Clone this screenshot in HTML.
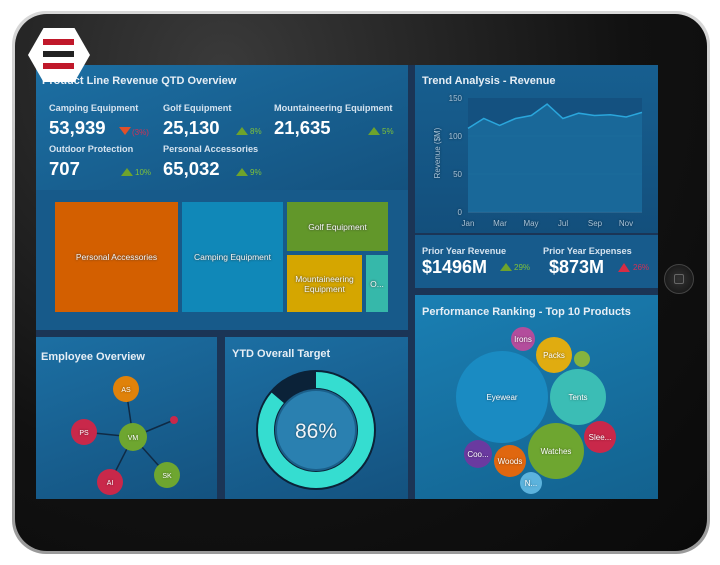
<!DOCTYPE html>
<html><head><style>
*{margin:0;padding:0;box-sizing:border-box}
body{width:720px;height:565px;background:#fff;position:relative;overflow:hidden;font-family:"Liberation Sans",sans-serif;color:#fff}
.a{position:absolute}
.p{position:absolute;background:linear-gradient(160deg,#1c6fa3,#14527f)}
.t{position:absolute;font-weight:bold;font-size:11px;color:#e6eef5}
.lbl{position:absolute;font-size:9.2px;font-weight:bold;color:#d5e3ef}
.big{position:absolute;font-size:18.5px;font-weight:bold}
.tm{position:absolute;display:flex;align-items:center;justify-content:center;text-align:center;font-size:8.5px;color:#f4f4f4;text-shadow:0 0 2px #333}
.up{color:#7ec23a;font-size:8px;position:absolute}
.up:before{content:"";display:inline-block;border-left:6px solid transparent;border-right:6px solid transparent;border-bottom:8px solid #6ea32c;margin-right:2px;vertical-align:-1px}
svg text{text-shadow:0 0 2px rgba(0,0,0,.5)}
</style></head><body>
<div class="a" style="left:12px;top:11px;width:698px;height:543px;border-radius:34px;background:linear-gradient(#d8d8d8,#9a9a9a);"></div>
<div class="a" style="left:15px;top:14px;width:692px;height:537px;border-radius:32px;background:radial-gradient(ellipse at 30% 10%,#3a3a3a,#111 60%,#0a0a0a);"></div>
<div class="a" style="left:664px;top:264px;width:30px;height:30px;border-radius:50%;background:radial-gradient(#333,#111);border:1px solid #444"></div>
<div class="a" style="left:674px;top:274px;width:10px;height:10px;border:1px solid #666;border-radius:2px"></div>
<div class="a" style="left:36px;top:65px;width:622px;height:434px;background:#1b3556"></div>

<div class="p" style="left:36px;top:65px;width:372px;height:125px"></div>
<div class="a" style="left:36px;top:190px;width:372px;height:140px;background:#175a8a"></div>
<div class="t" style="left:42px;top:75px">Product Line Revenue QTD Overview</div>
<div class="lbl" style="left:49px;top:103px">Camping Equipment</div>
<div class="big" style="left:49px;top:117px">53,939</div>
<div class="a" style="left:119px;top:127px;border-left:6px solid transparent;border-right:6px solid transparent;border-top:8px solid #e0502a"></div>
<div class="a" style="left:132px;top:128px;font-size:8px;color:#d33055">(3%)</div>
<div class="lbl" style="left:163px;top:103px">Golf Equipment</div>
<div class="big" style="left:163px;top:117px">25,130</div>
<div class="up" style="left:236px;top:127px">8%</div>
<div class="lbl" style="left:274px;top:103px">Mountaineering Equipment</div>
<div class="big" style="left:274px;top:117px">21,635</div>
<div class="up" style="left:368px;top:127px">5%</div>
<div class="lbl" style="left:49px;top:144px">Outdoor Protection</div>
<div class="big" style="left:49px;top:158px">707</div>
<div class="up" style="left:121px;top:168px">10%</div>
<div class="lbl" style="left:163px;top:144px">Personal Accessories</div>
<div class="big" style="left:163px;top:158px">65,032</div>
<div class="up" style="left:236px;top:168px">9%</div>

<div class="tm" style="left:55px;top:202px;width:123px;height:110px;background:#d35f00">Personal Accessories</div>
<div class="tm" style="left:182px;top:202px;width:101px;height:110px;background:#1088b8">Camping Equipment</div>
<div class="tm" style="left:287px;top:202px;width:101px;height:49px;background:#62972a">Golf Equipment</div>
<div class="tm" style="left:287px;top:255px;width:75px;height:57px;background:#d5a600">Mountaineering<br>Equipment</div>
<div class="tm" style="left:366px;top:255px;width:22px;height:57px;background:#36b8aa">O...</div>

<div class="a" style="left:28px;top:28px;width:62px;height:54px;background:#fff;clip-path:polygon(25% 0,75% 0,100% 50%,75% 100%,25% 100%,0 50%)"></div>
<div class="a" style="left:43px;top:39px;width:31px;height:6px;background:#c0182a"></div>
<div class="a" style="left:43px;top:51px;width:31px;height:6px;background:#222"></div>
<div class="a" style="left:43px;top:63px;width:31px;height:6px;background:#c0182a"></div>

<div class="p" style="left:415px;top:65px;width:243px;height:168px;background:linear-gradient(#175f90,#134f7c)"></div>
<div class="t" style="left:422px;top:75px">Trend Analysis - Revenue</div>
<svg class="a" style="left:415px;top:90px" width="243" height="140">
<rect x="53" y="8" width="174" height="114" fill="#145180"/>
<g stroke="#2a6d9a" stroke-width="0.7"><line x1="53" x2="227" y1="46" y2="46"/><line x1="53" x2="227" y1="84" y2="84"/></g>
<line x1="53" x2="227" y1="122" y2="122" stroke="#3d78a0"/>
<path d="M53,38.4 L68.8,28.5 L84.6,35.4 L100.5,28.5 L116.3,25.5 L132.1,14.1 L147.9,28.5 L163.7,23.2 L179.5,25.5 L195.4,24.7 L211.2,27 L227,22.4 L227,122 L53,122Z" fill="#1a6c9e" opacity="0.85"/>
<path d="M53,38.4 L68.8,28.5 L84.6,35.4 L100.5,28.5 L116.3,25.5 L132.1,14.1 L147.9,28.5 L163.7,23.2 L179.5,25.5 L195.4,24.7 L211.2,27 L227,22.4" fill="none" stroke="#2aa6dc" stroke-width="1.5"/>
<g font-size="8" fill="#a9c3d8" text-anchor="end"><text x="47" y="11">150</text><text x="47" y="49">100</text><text x="47" y="87">50</text><text x="47" y="125">0</text></g>
<g font-size="8" fill="#a9c3d8" text-anchor="middle"><text x="53" y="136">Jan</text><text x="85" y="136">Mar</text><text x="116" y="136">May</text><text x="148" y="136">Jul</text><text x="180" y="136">Sep</text><text x="211" y="136">Nov</text></g>
<text transform="translate(25,63) rotate(-90)" font-size="8" fill="#a9c3d8" text-anchor="middle">Revenue ($M)</text>
</svg>
<div class="a" style="left:415px;top:235px;width:243px;height:53px;background:#175b8c"></div>
<div class="lbl" style="left:422px;top:246px">Prior Year Revenue</div>
<div class="big" style="left:422px;top:257px;font-size:18px">$1496M</div>
<div class="up" style="left:500px;top:263px">29%</div>
<div class="lbl" style="left:543px;top:246px">Prior Year Expenses</div>
<div class="big" style="left:549px;top:257px;font-size:18px">$873M</div>
<div class="a" style="left:618px;top:263px;border-left:6px solid transparent;border-right:6px solid transparent;border-bottom:9px solid #d62c44"></div>
<div class="a" style="left:633px;top:263px;font-size:8px;color:#d33055">26%</div>

<div class="p" style="left:415px;top:295px;width:243px;height:204px;background:linear-gradient(160deg,#1a7fb3,#13628f)"></div>
<div class="t" style="left:422px;top:306px">Performance Ranking - Top 10 Products</div>
<svg class="a" style="left:0;top:0" width="720" height="565" font-family="Liberation Sans" font-size="8" fill="#fff" text-anchor="middle">
<circle cx="502" cy="397" r="46" fill="#1a8bc2"/><text x="502" y="400">Eyewear</text>
<circle cx="523" cy="339" r="12" fill="#b34d9c"/><text x="523" y="342">Irons</text>
<circle cx="554" cy="355" r="18" fill="#e0ac10"/><text x="554" y="358">Packs</text>
<circle cx="582" cy="359" r="8" fill="#86b33e"/>
<circle cx="578" cy="397" r="28" fill="#3bbdb5"/><text x="578" y="400">Tents</text>
<circle cx="600" cy="437" r="16" fill="#c9284a"/><text x="600" y="440">Slee...</text>
<circle cx="556" cy="451" r="28" fill="#6ea630"/><text x="556" y="454">Watches</text>
<circle cx="478" cy="454" r="14" fill="#6a3aa0"/><text x="478" y="457">Coo...</text>
<circle cx="510" cy="461" r="16" fill="#e0670f"/><text x="510" y="464">Woods</text>
<circle cx="531" cy="483" r="11" fill="#5cb3dd"/><text x="531" y="486">N...</text>
</svg>

<div class="p" style="left:36px;top:337px;width:181px;height:162px"></div>
<div class="t" style="left:41px;top:351px">Employee Overview</div>
<div class="p" style="left:225px;top:337px;width:183px;height:162px"></div>
<div class="t" style="left:232px;top:348px">YTD Overall Target</div>
<svg class="a" style="left:0;top:0" width="720" height="565" font-family="Liberation Sans" font-size="7" fill="#fff" text-anchor="middle">
<g stroke="#0f2a44" stroke-width="1.5"><line x1="133" y1="437" x2="126" y2="389"/><line x1="133" y1="437" x2="84" y2="432"/><line x1="133" y1="437" x2="110" y2="482"/><line x1="133" y1="437" x2="167" y2="475"/><line x1="133" y1="437" x2="174" y2="420"/></g>
<circle cx="126" cy="389" r="13" fill="#e0820a"/><text x="126" y="392">AS</text>
<circle cx="84" cy="432" r="13" fill="#c9284a"/><text x="84" y="435">PS</text>
<circle cx="110" cy="482" r="13" fill="#c9284a"/><text x="110" y="485">AI</text>
<circle cx="167" cy="475" r="13" fill="#6ea630"/><text x="167" y="478">SK</text>
<circle cx="133" cy="437" r="14" fill="#6ea630"/><text x="133" y="440">VM</text>
<circle cx="174" cy="420" r="4" fill="#c9284a"/>
<circle cx="316" cy="430" r="60" fill="#0b2238"/>
<circle cx="316" cy="430" r="50" fill="none" stroke="#35ddd0" stroke-width="16" stroke-dasharray="270.2 314.2" transform="rotate(-90 316 430)"/>
<circle cx="316" cy="430" r="41" fill="#1b5f8a"/>
<circle cx="316" cy="430" r="39" fill="#2a80b0"/>
<text x="316" y="438" font-size="21" fill="#f0f4f8">86%</text>
</svg>
</body></html>
